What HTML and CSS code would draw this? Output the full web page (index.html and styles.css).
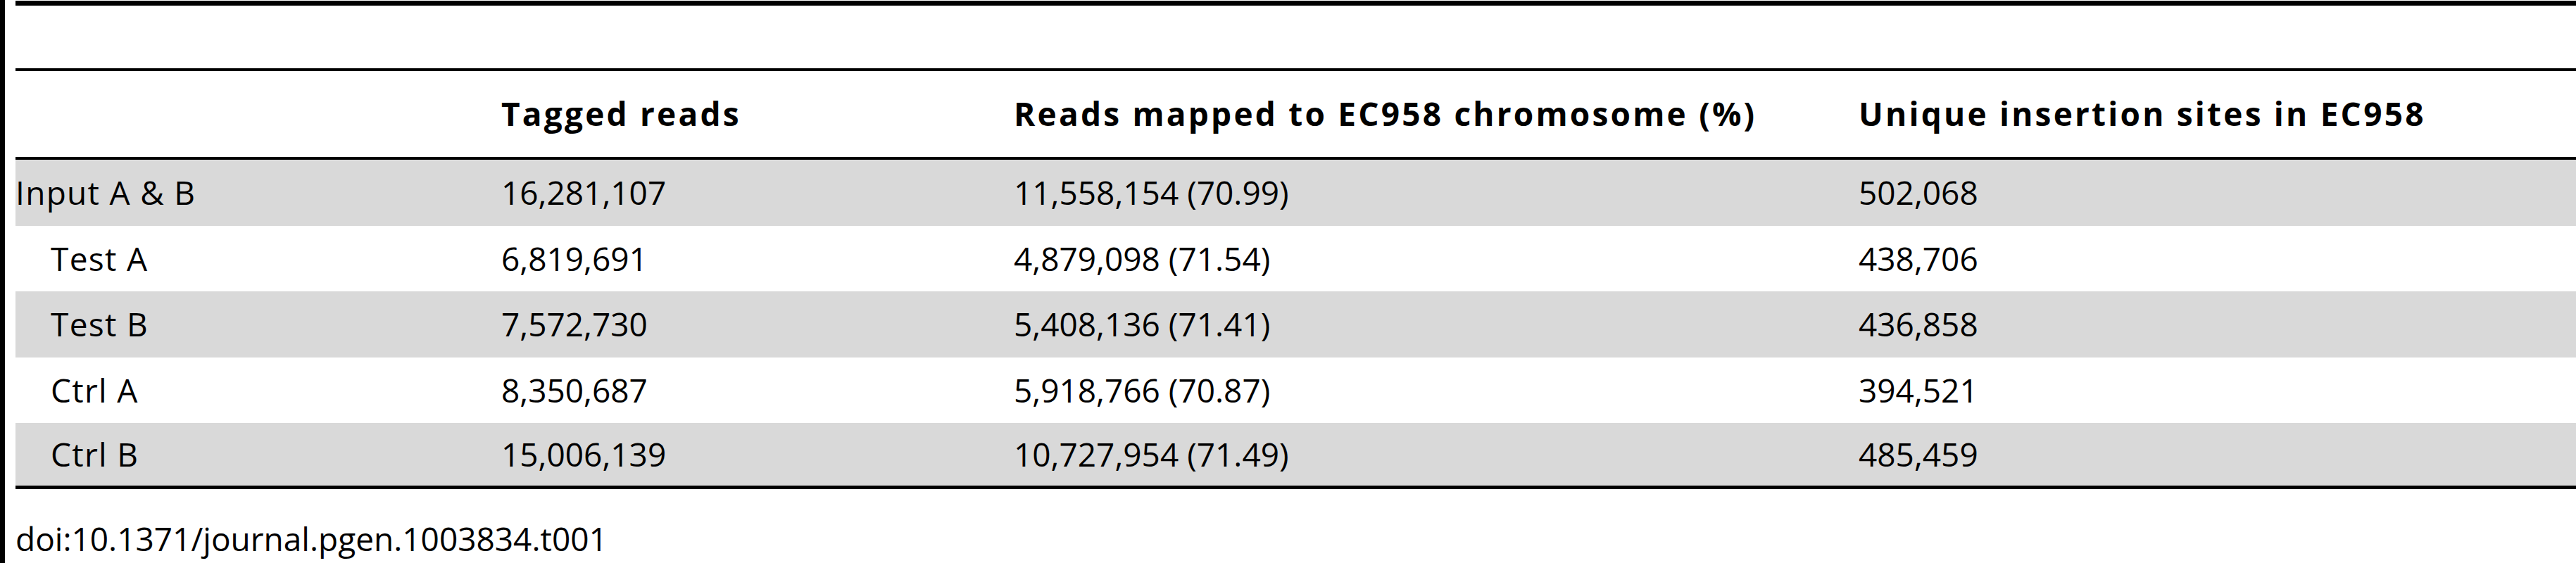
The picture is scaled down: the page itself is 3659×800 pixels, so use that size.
FILE: index.html
```html
<!DOCTYPE html>
<html>
<head>
<meta charset="utf-8">
<link rel="stylesheet" href="styles.css">
</head>
<body>
<div class="page">
  <div class="bar"></div>
  <div class="content">
    <table class="data">
      <colgroup>
        <col class="c1"><col class="c2"><col class="c3"><col class="c4">
      </colgroup>
      <tbody>
        <tr class="cap"><td colspan="4"></td></tr>
        <tr class="head">
          <th></th>
          <th>Tagged reads</th>
          <th>Reads mapped to EC958 chromosome (%)</th>
          <th>Unique insertion sites in EC958</th>
        </tr>
        <tr class="shade"><td class="name">Input A &amp; B</td><td>16,281,107</td><td>11,558,154 (70.99)</td><td>502,068</td></tr>
        <tr><td class="name sub">Test A</td><td>6,819,691</td><td>4,879,098 (71.54)</td><td>438,706</td></tr>
        <tr class="shade"><td class="name sub">Test B</td><td>7,572,730</td><td>5,408,136 (71.41)</td><td>436,858</td></tr>
        <tr><td class="name sub">Ctrl A</td><td>8,350,687</td><td>5,918,766 (70.87)</td><td>394,521</td></tr>
        <tr class="shade last"><td class="name sub">Ctrl B</td><td>15,006,139</td><td>10,727,954 (71.49)</td><td>485,459</td></tr>
      </tbody>
    </table>
    <div class="doi">doi:10.1371/journal.pgen.1003834.t001</div>
  </div>
</div>
</body>
</html>
```
FILE: styles.css
```css
html, body {
  margin: 0;
  padding: 0;
  background: #fff;
}
body {
  font-family: "Open Sans", "DejaVu Sans", sans-serif;
  color: #000;
  font-size: 46px;
}
.page {
  display: flex;
  height: 800px;
  overflow: hidden;
}
.bar {
  flex: none;
  width: 7px;
  background: #000;
}
.content {
  flex: 1;
  margin-left: 15px;
  padding-top: 1px;
  min-width: 0;
}
.data {
  width: 100%;
  table-layout: fixed;
  border-collapse: separate;
  border-spacing: 0;
}
.c1 { width: 690px; }
.c2 { width: 728px; }
.c3 { width: 1200px; }
.data td, .data th {
  box-sizing: border-box;
  padding: 0;
  text-align: left;
  vertical-align: middle;
  white-space: nowrap;
  line-height: 1.2;
}
.cap td {
  height: 100px;
  border-top: 7px solid #000;
  border-bottom: 4px solid #000;
}
.head th {
  height: 126px;
  font-weight: 700;
  letter-spacing: 3.2px;
  border-bottom: 4px solid #000;
}
.data tbody tr:not(.cap):not(.head) td {
  height: 93.6px;
}
.shade td {
  background: #d9d9d9;
}
.data .last td {
  height: 98.6px;
  border-bottom: 5px solid #000;
}
.name {
  letter-spacing: 1.3px;
}
.data .sub {
  padding-left: 50px;
}
.doi {
  margin-top: 40px;
  line-height: 60px;
}
```
